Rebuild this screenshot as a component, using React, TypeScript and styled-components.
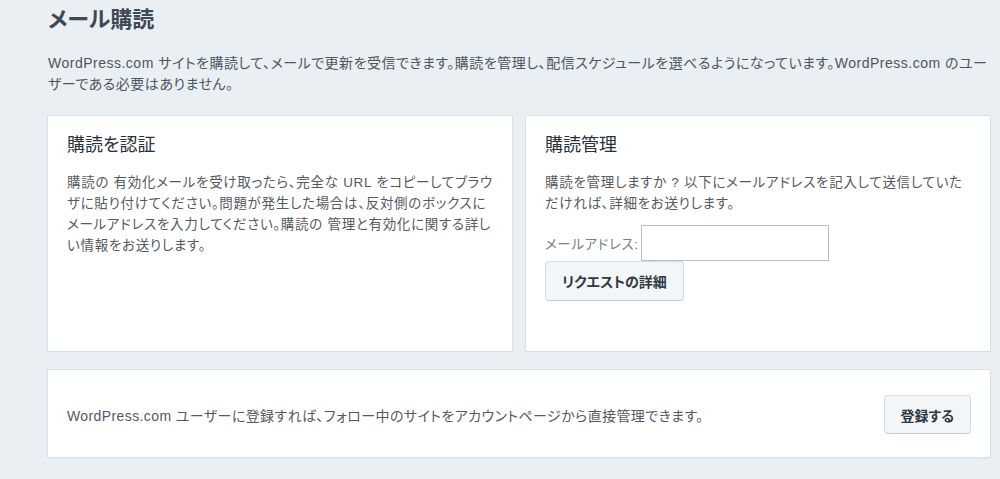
import styled, { createGlobalStyle } from "styled-components";

const GlobalStyle = createGlobalStyle`
  body {
    margin: 0;
    background: #e9eff3;
    font-family: "Liberation Sans", "Noto Sans CJK JP", sans-serif;
    color: #4f555b;
  }
`;

const Page = styled.div`
  padding: 4px 10px 20px 48px;
  font-feature-settings: "palt";
`;

const Title = styled.h1`
  margin: 0;
  font-size: 22px;
  line-height: 32px;
  font-weight: bold;
  color: #3d4a55;
`;

const Intro = styled.p`
  margin: 17px 0 0;
  font-size: 14px;
  line-height: 21px;
  letter-spacing: 0.5px;
  color: #4f555b;
`;

const CardGrid = styled.div`
  display: grid;
  grid-template-columns: 1fr 1fr;
  gap: 14px;
  margin-top: 21px;
`;

const Card = styled.section`
  background: #fff;
  box-shadow: 0 0 0 1px rgba(200, 215, 225, 0.5), 0 1px 2px #dde5eb;
  padding: 16px 19px;
  box-sizing: border-box;
  min-height: 235px;
`;

const CardTitle = styled.h2`
  margin: 0;
  font-size: 18px;
  line-height: 27px;
  font-weight: normal;
  color: #27323b;
`;

const CardText = styled.p`
  margin: 13px 0 0;
  font-size: 13.5px;
  line-height: 21px;
  letter-spacing: 0.7px;
  color: #555a5f;
`;

const FieldRow = styled.div`
  display: flex;
  align-items: center;
  margin-top: 11px;
`;

const Label = styled.label`
  font-size: 13.5px;
  letter-spacing: 0.6px;
  color: #7a8086;
  margin-right: 2px;
`;

const Input = styled.input`
  width: 188px;
  height: 36px;
  box-sizing: border-box;
  border: 1px solid #b9bec3;
  background: #fff;
  padding: 4px 8px;
`;

const Button = styled.button<{ $h?: number }>`
  font-family: inherit;
  font-feature-settings: "palt";
  letter-spacing: 0;
  font-size: 14px;
  font-weight: bold;
  color: #2e3a44;
  background: #f3f6f8;
  border: 1px solid #d3dde5;
  border-bottom-color: #c0ccd6;
  border-radius: 4px;
  height: ${(p) => p.$h ?? 40}px;
  padding: 0 16px;
  cursor: pointer;
`;

const Footer = styled.section`
  margin-top: 19px;
  background: #fff;
  box-shadow: 0 0 0 1px rgba(200, 215, 225, 0.5), 0 1px 2px #dde5eb;
  padding: 25px 19px 23px;
  display: flex;
  align-items: center;
  justify-content: space-between;
`;

const FooterText = styled.span`
  font-size: 14px;
  letter-spacing: 0.4px;
  color: #555a5f;
`;

export default function App() {
  return (
    <>
      <GlobalStyle />
      <Page>
        <Title>メール購読</Title>
        <Intro>
          WordPress.com サイトを購読して、メールで更新を受信できます。購読を管理し、配信スケジュールを選べるようになっています。WordPress.com のユーザーである必要はありません。
        </Intro>
        <CardGrid>
          <Card>
            <CardTitle>購読を認証</CardTitle>
            <CardText>
              購読の 有効化メールを受け取ったら、完全な URL をコピーしてブラウザに貼り付けてください。問題が発生した場合は、反対側のボックスにメールアドレスを入力してください。購読の 管理と有効化に関する詳しい情報をお送りします。
            </CardText>
          </Card>
          <Card>
            <CardTitle>購読管理</CardTitle>
            <CardText>
              購読を管理しますか ? 以下にメールアドレスを記入して送信していただければ、詳細をお送りします。
            </CardText>
            <FieldRow>
              <Label htmlFor="email">メールアドレス:</Label>
              <Input id="email" type="email" />
            </FieldRow>
            <Button>リクエストの詳細</Button>
          </Card>
        </CardGrid>
        <Footer>
          <FooterText>
            WordPress.com ユーザーに登録すれば、フォロー中のサイトをアカウントページから直接管理できます。
          </FooterText>
          <Button $h={39}>登録する</Button>
        </Footer>
      </Page>
    </>
  );
}
